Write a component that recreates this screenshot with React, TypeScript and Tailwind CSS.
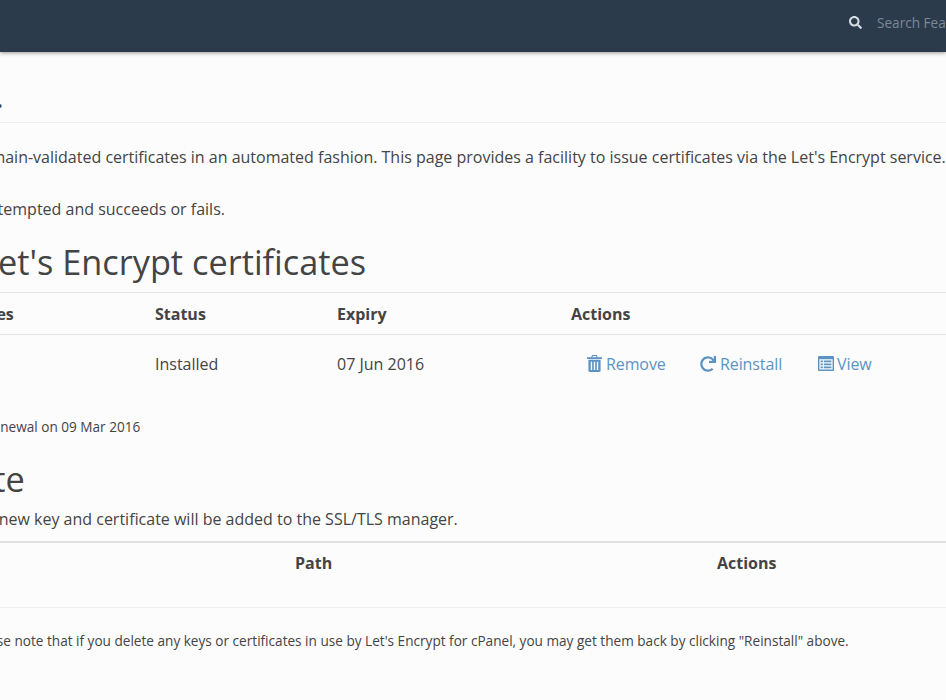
import { FaRedo, FaSearch } from 'react-icons/fa';

const TrashIcon = () => (
  <svg viewBox="0 0 16 18" className="w-[15px] h-[17px]" fill="currentColor">
    <path d="M5.5 0h5l1 2.2H16v2H0v-2h4.5zM6.2 1.1l-.4 1.1h4.4l-.4-1.1z" fillRule="evenodd" />
    <path d="M1.5 5h13v11.5a1.5 1.5 0 0 1-1.5 1.5H3a1.5 1.5 0 0 1-1.5-1.5zM4 7v9h1.5V7zM7.25 7v9h1.5V7zM10.5 7v9H12V7z" fillRule="evenodd" />
  </svg>
);

const ListAltIcon = () => (
  <svg viewBox="0 0 16 15" className="w-[16px] h-[15px]" fill="currentColor">
    <path d="M1 0h14a1 1 0 0 1 1 1v13a1 1 0 0 1-1 1H1a1 1 0 0 1-1-1V1a1 1 0 0 1 1-1zM1.4 3.2v10.4h13.2V3.2z" fillRule="evenodd" />
    <path d="M2.6 4.4h2.2v1.8H2.6zM5.8 4.4h7.6v1.8H5.8zM2.6 7.4h2.2v1.8H2.6zM5.8 7.4h7.6v1.8H5.8zM2.6 10.4h2.2v1.8H2.6zM5.8 10.4h7.6v1.8H5.8z" />
  </svg>
);

export default function App() {
  return (
    <div className="w-[946px] h-[700px] overflow-hidden bg-[#fcfcfc] text-[#444] text-[16px] font-['Open_Sans',sans-serif]">
      <div className="h-[52px] bg-[#2c3b4c] shadow-[0_1px_4px_rgba(0,0,0,0.4)] flex items-center overflow-hidden">
        <div className="ml-[849px] mt-[-6px] flex items-center gap-[15px] shrink-0">
          <FaSearch className="w-[13px] h-[13px] text-[#d5dde3]" />
          <span className="text-[13.6px] text-[#7d8893] whitespace-nowrap">Search Features</span>
        </div>
      </div>

      <div className="h-[71px] border-b border-[#eee] flex items-end pb-[8px]">
        <span className="ml-[-4px] text-[24px] leading-[30px] font-bold">.</span>
      </div>

      <p className="mt-[22px] leading-[24px] whitespace-nowrap ml-[-29px]">domain-validated certificates in an automated fashion. This page provides a facility to issue certificates via the Let's Encrypt service.</p>
      <p className="mt-[28px] leading-[24px] whitespace-nowrap ml-[-17px]">attempted and succeeds or fails.</p>

      <h2 className="mt-[19px] text-[34.3px] leading-[44px] whitespace-nowrap ml-[-20px]">Let's Encrypt certificates</h2>

      <div className="mt-[8px] h-[43px] border-y border-[#e4e4e4] grid grid-cols-[155px_182px_234px_1fr] items-center font-bold">
        <div className="ml-[-42px] whitespace-nowrap">Names</div>
        <div>Status</div>
        <div>Expiry</div>
        <div>Actions</div>
      </div>
      <div className="h-[59px] pb-[2px] grid grid-cols-[155px_182px_234px_1fr] items-center">
        <div />
        <div>Installed</div>
        <div>07 Jun 2016</div>
        <div className="pl-[16px] flex items-center text-[#5b93c4] tracking-[-0.1px] whitespace-nowrap">
          <a className="flex items-center gap-[4px] w-[113px]"><TrashIcon />Remove</a>
          <a className="flex items-center gap-[4px] w-[118px]"><FaRedo className="w-[16px] h-[16px]" />Reinstall</a>
          <a className="flex items-center gap-[3px]"><ListAltIcon />View</a>
        </div>
      </div>

      <p className="mt-[24px] text-[13.6px] leading-[18px] whitespace-nowrap ml-[-13px]">renewal on 09 Mar 2016</p>

      <h2 className="mt-[21px] text-[34.3px] leading-[44px] whitespace-nowrap ml-[-133px]">certificate</h2>
      <p className="mt-[6px] leading-[24px] whitespace-nowrap ml-[-30px]">the new key and certificate will be added to the SSL/TLS manager.</p>

      <div className="mt-[10px] h-[42px] border-t-2 border-[#e0e0e0] grid grid-cols-[295px_422px_1fr] items-center font-bold">
        <div />
        <div>Path</div>
        <div>Actions</div>
      </div>
      <div className="h-[25px] border-b border-[#eee]" />

      <p className="mt-[24px] text-[13.6px] leading-[18px] whitespace-nowrap ml-[-30px]">Please note that if you delete any keys or certificates in use by Let's Encrypt for cPanel, you may get them back by clicking "Reinstall" above.</p>
    </div>
  );
}
